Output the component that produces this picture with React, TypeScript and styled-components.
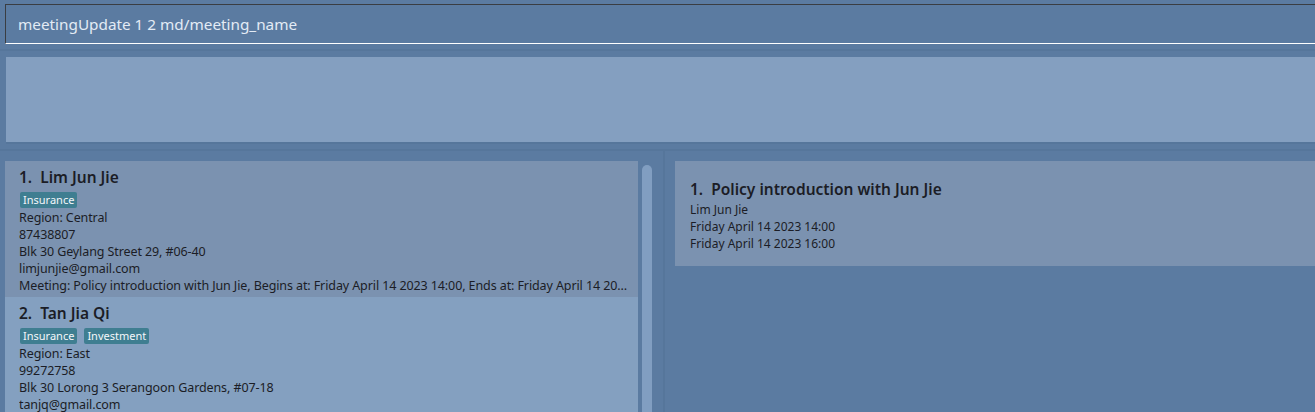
import styled, { createGlobalStyle } from 'styled-components';

const GlobalStyle = createGlobalStyle`
  html, body {
    margin: 0;
    padding: 0;
    background: #5b7ba1;
  }
  * {
    box-sizing: border-box;
  }
`;

type Person = {
  name: string;
  tags: string[];
  region: string;
  phone: string;
  address: string;
  email: string;
  meeting?: string;
};

const people: Person[] = [
  {
    name: 'Lim Jun Jie',
    tags: ['Insurance'],
    region: 'Central',
    phone: '87438807',
    address: 'Blk 30 Geylang Street 29, #06-40',
    email: 'limjunjie@gmail.com',
    meeting:
      'Meeting: Policy introduction with Jun Jie, Begins at: Friday April 14 2023 14:00, Ends at: Friday April 14 2023 16:00',
  },
  {
    name: 'Tan Jia Qi',
    tags: ['Insurance', 'Investment'],
    region: 'East',
    phone: '99272758',
    address: 'Blk 30 Lorong 3 Serangoon Gardens, #07-18',
    email: 'tanjq@gmail.com',
  },
];

const Page = styled.div`
  width: 1315px;
  height: 412px;
  overflow: hidden;
  background: #5b7ba1;
  font-family: "Noto Sans", "Open Sans", sans-serif;
  display: flex;
  flex-direction: column;
`;

const CommandBar = styled.div`
  margin: 4px 0 0 5px;
  height: 40px;
  border-top: 1px solid #3a3d42;
  border-left: 1px solid #3a3d42;
  border-bottom: 1px solid #ffffff;
  padding-left: 12px;
  display: flex;
  align-items: center;
  font-size: 15.3px;
  color: #e3ebf5;
`;

const ResultArea = styled.div`
  margin-top: 5px;
  border-top: 2px solid #56769b;
  border-bottom: 2px solid #56769b;
  padding: 6px 0 5px 6px;
`;

const ResultBox = styled.div`
  height: 87px;
  background: #849fc0;
  border-bottom: 2px solid #56769b;
`;

const Main = styled.div`
  flex: 1;
  display: flex;
  min-height: 0;
`;

const ListPane = styled.div`
  width: 665px;
  border-right: 2px solid #56769b;
  display: flex;
  padding: 10px 0 0 5px;
  gap: 4px;
`;

const List = styled.div`
  width: 633px;
  display: flex;
  flex-direction: column;
`;

const ScrollTrack = styled.div`
  width: 24px;
  padding-top: 4px;
`;

const ScrollThumb = styled.div`
  width: 10px;
  height: 300px;
  background: #819ec1;
  border-radius: 5px;
`;

const MeetingPane = styled.div`
  flex: 1;
  padding: 10px 0 0 10px;
`;

const Card = styled.div<{ $selected?: boolean }>`
  background: ${(p) => (p.$selected ? '#7b92b0' : '#84a0c0')};
  padding: 6px 10px 3px 14px;
  color: #1b1d26;
`;

const Title = styled.div`
  font-size: 15.5px;
  font-weight: 600;
  line-height: 21px;
  white-space: pre;
`;

const Tags = styled.div`
  display: flex;
  gap: 7px;
  margin: 4px 0 1px 1px;
`;

const Tag = styled.span`
  background: #3f7e91;
  color: #f4f7fa;
  font-size: 11px;
  line-height: 16px;
  padding: 0 3px;
  border-radius: 2px;
`;

const Line = styled.div`
  font-size: 12.5px;
  line-height: 17px;
  letter-spacing: -0.1px;
  white-space: nowrap;
  overflow: hidden;
  text-overflow: ellipsis;
`;

const MeetingCard = styled.div`
  background: #7b92b0;
  padding: 18px 10px 14px 15px;
  color: #1b1d26;
`;

const MeetingLines = styled.div`
  margin-top: 1px;
`;

const SmallLine = styled.div`
  font-size: 12px;
  line-height: 17px;
`;

export default function App() {
  return (
    <Page>
      <GlobalStyle />
      <CommandBar>meetingUpdate 1 2 md/meeting_name</CommandBar>
      <ResultArea>
        <ResultBox />
      </ResultArea>
      <Main>
        <ListPane>
          <List>
            {people.map((p, i) => (
              <Card key={p.name} $selected={i === 0}>
                <Title>{`${i + 1}.  ${p.name}`}</Title>
                <Tags>
                  {p.tags.map((t) => (
                    <Tag key={t}>{t}</Tag>
                  ))}
                </Tags>
                <Line>Region: {p.region}</Line>
                <Line>{p.phone}</Line>
                <Line>{p.address}</Line>
                <Line>{p.email}</Line>
                {p.meeting && <Line>{p.meeting}</Line>}
              </Card>
            ))}
          </List>
          <ScrollTrack>
            <ScrollThumb />
          </ScrollTrack>
        </ListPane>
        <MeetingPane>
          <MeetingCard>
            <Title>{'1.  Policy introduction with Jun Jie'}</Title>
            <MeetingLines>
              <SmallLine>Lim Jun Jie</SmallLine>
              <SmallLine>Friday April 14 2023 14:00</SmallLine>
              <SmallLine>Friday April 14 2023 16:00</SmallLine>
            </MeetingLines>
          </MeetingCard>
        </MeetingPane>
      </Main>
    </Page>
  );
}
